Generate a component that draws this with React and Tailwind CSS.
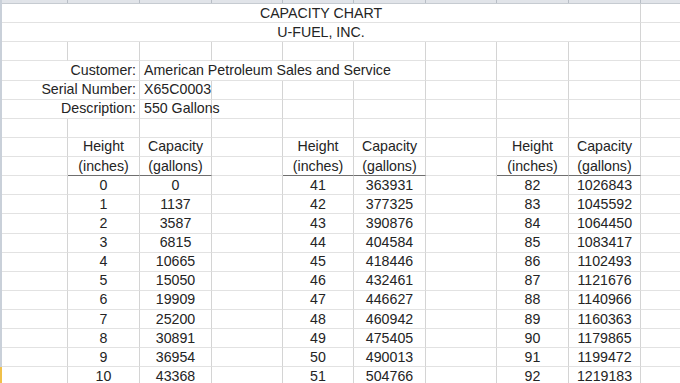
import React from 'react';

const COLW = ['w-[66px]', 'w-[72px]', 'w-[72px]', 'w-[71px]', 'w-[71px]', 'w-[72px]', 'w-[71px]', 'w-[72px]', 'w-[72px]'];

const left = [
    [0, 0], [1, 1137], [2, 3587], [3, 6815], [4, 10665], [5, 15050],
    [6, 19909], [7, 25200], [8, 30891], [9, 36954], [10, 43368],
];
const middle = [
    [41, 363931], [42, 377325], [43, 390876], [44, 404584], [45, 418446], [46, 432461],
    [47, 446627], [48, 460942], [49, 475405], [50, 490013], [51, 504766],
];
const right = [
    [82, 1026843], [83, 1045592], [84, 1064450], [85, 1083417], [86, 1102493], [87, 1121676],
    [88, 1140966], [89, 1160363], [90, 1179865], [91, 1199472], [92, 1219183],
];

const Cell = ({ w, children, align = 'center', dark = false }) => {
    const alignClass = align === 'right' ? 'justify-end pr-[3px]' : align === 'left' ? 'justify-start pl-[4px]' : 'justify-center';
    return (
        <div
            className={`${w} shrink-0 h-full flex items-center whitespace-nowrap border-r border-r-[#d4d4d4] border-b ${dark ? 'border-b-[#6f6f6f]' : 'border-b-[#e2e2e2]'} ${alignClass}`}
        >
            {children}
        </div>
    );
};

const Row = ({ children }) => (
    <div className="flex shrink-0 h-[19.14px] leading-[19px]">
        {children}
        <div className="flex-1 h-full border-b border-b-[#e2e2e2]" />
    </div>
);

const EmptyRow = () => (
    <Row>
        {COLW.map((w, i) => <Cell key={i} w={w} />)}
    </Row>
);

export default function App() {
    return (
        <div className="w-[680px] h-[383px] overflow-hidden bg-white text-[#242424] text-[14.2px] font-['Liberation_Sans',Arial,sans-serif] flex">
            {/* row header edge */}
            <div className="w-[2px] shrink-0 flex flex-col">
                <div className="h-[367px] shrink-0 bg-[#c9d0d9]" />
                <div className="flex-1 bg-[#f0c04a]" />
            </div>

            <div className="flex-1 flex flex-col">
                {/* column header edge */}
                <div className="h-[4px] shrink-0 flex bg-[#e1e4e9] border-b border-b-[#c6cbd1]">
                    {COLW.map((w, i) => (
                        <div key={i} className={`${w} shrink-0 border-r border-r-[#b8bec6]`} />
                    ))}
                </div>

                {/* title */}
                <Row>
                    <Cell w="w-[639px]">CAPACITY CHART</Cell>
                </Row>
                <Row>
                    <Cell w="w-[639px]">U-FUEL, INC.</Cell>
                </Row>
                <EmptyRow />

                {/* tank details */}
                <Row>
                    <Cell w="w-[138px]" align="right">Customer:</Cell>
                    <Cell w="w-[286px]" align="left">American Petroleum Sales and Service</Cell>
                    <Cell w="w-[71px]" />
                    <Cell w="w-[72px]" />
                    <Cell w="w-[72px]" />
                </Row>
                <Row>
                    <Cell w="w-[138px]" align="right">Serial Number:</Cell>
                    <Cell w="w-[72px]" align="left">X65C0003</Cell>
                    {COLW.slice(3).map((w, i) => <Cell key={i} w={w} />)}
                </Row>
                <Row>
                    <Cell w="w-[138px]" align="right">Description:</Cell>
                    <Cell w="w-[72px]" align="left">550 Gallons</Cell>
                    {COLW.slice(3).map((w, i) => <Cell key={i} w={w} />)}
                </Row>
                <EmptyRow />

                {/* column headings */}
                <Row>
                    <Cell w={COLW[0]} />
                    <Cell w={COLW[1]}>Height</Cell>
                    <Cell w={COLW[2]}>Capacity</Cell>
                    <Cell w={COLW[3]} />
                    <Cell w={COLW[4]}>Height</Cell>
                    <Cell w={COLW[5]}>Capacity</Cell>
                    <Cell w={COLW[6]} />
                    <Cell w={COLW[7]}>Height</Cell>
                    <Cell w={COLW[8]}>Capacity</Cell>
                </Row>
                <Row>
                    <Cell w={COLW[0]} />
                    <Cell w={COLW[1]} dark>(inches)</Cell>
                    <Cell w={COLW[2]} dark>(gallons)</Cell>
                    <Cell w={COLW[3]} />
                    <Cell w={COLW[4]} dark>(inches)</Cell>
                    <Cell w={COLW[5]} dark>(gallons)</Cell>
                    <Cell w={COLW[6]} />
                    <Cell w={COLW[7]} dark>(inches)</Cell>
                    <Cell w={COLW[8]} dark>(gallons)</Cell>
                </Row>

                {/* chart rows */}
                {left.map((l, i) => (
                    <Row key={i}>
                        <Cell w={COLW[0]} />
                        <Cell w={COLW[1]}>{l[0]}</Cell>
                        <Cell w={COLW[2]}>{l[1]}</Cell>
                        <Cell w={COLW[3]} />
                        <Cell w={COLW[4]}>{middle[i][0]}</Cell>
                        <Cell w={COLW[5]}>{middle[i][1]}</Cell>
                        <Cell w={COLW[6]} />
                        <Cell w={COLW[7]}>{right[i][0]}</Cell>
                        <Cell w={COLW[8]}>{right[i][1]}</Cell>
                    </Row>
                ))}
            </div>
        </div>
    );
}
